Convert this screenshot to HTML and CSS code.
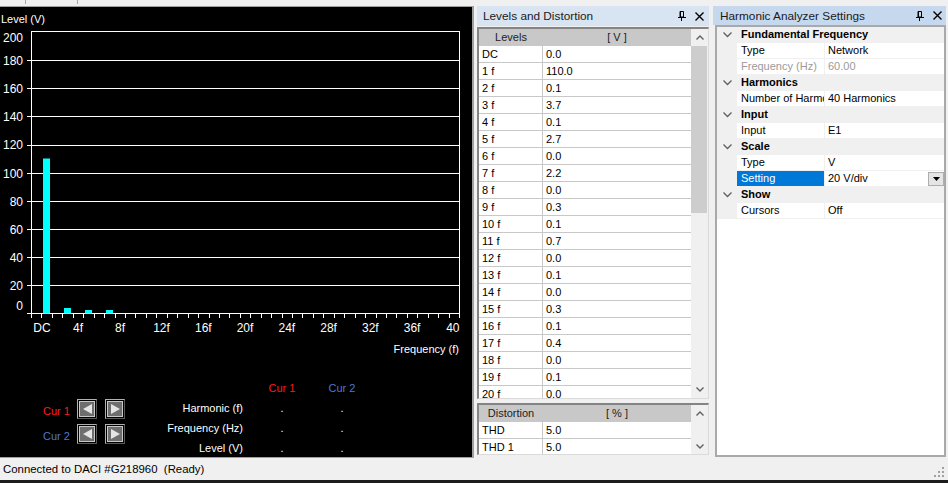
FILE: index.html
```html
<!DOCTYPE html>
<html>
<head>
<meta charset="utf-8">
<title>Harmonic Analyzer</title>
<link rel="stylesheet" href="styles.css">
</head>
<body>
<div class="app">
  <div class="topstrip"><span class="tsep s1"></span><span class="tsep s2"></span></div>
  <div class="main">
    <div class="chartpanel">
      <svg class="chart" width="472" height="370" viewBox="0 7 472 370">
        <text class="ct small" x="1" y="23">Level (V)</text>
        <g class="grid-lines" stroke="#fff" stroke-width="1" fill="none">
          <path d="M31 31.5H460"/>
          <path d="M27 60.5H460M27 88.5H460M27 116.5H460M27 145.5H460M27 173.5H460M27 201.5H460M27 229.5H460M27 257.5H460M27 285.5H460M27 313.5H460"/>
          <path d="M31.5 31V318M459.5 31V318"/>
          <path d="M41.5 314v4M52.5 314v4M62.5 314v4M73.5 314v4M83.5 314v4M94.5 314v4M104.5 314v4M115.5 314v4M125.5 314v4M135.5 314v4M146.5 314v4M156.5 314v4M167.5 314v4M177.5 314v4M188.5 314v4M198.5 314v4M209.5 314v4M219.5 314v4M229.5 314v4M240.5 314v4M250.5 314v4M261.5 314v4M271.5 314v4M282.5 314v4M292.5 314v4M302.5 314v4M313.5 314v4M323.5 314v4M334.5 314v4M344.5 314v4M355.5 314v4M365.5 314v4M376.5 314v4M386.5 314v4M396.5 314v4M407.5 314v4M417.5 314v4M428.5 314v4M438.5 314v4M449.5 314v4"/>
        </g>
        <g class="ct" text-anchor="end">
          <text x="23" y="42">200</text>
          <text x="23" y="65">180</text>
          <text x="23" y="93">160</text>
          <text x="23" y="121">140</text>
          <text x="23" y="149">120</text>
          <text x="23" y="178">100</text>
          <text x="23" y="206">80</text>
          <text x="23" y="234">60</text>
          <text x="23" y="262">40</text>
          <text x="23" y="290">20</text>
          <text x="23" y="310">0</text>
        </g>
        <g fill="#00ffff">
          <rect x="43" y="158.5" width="7" height="155"/>
          <rect x="64" y="308" width="7" height="5.5"/>
          <rect x="85" y="310" width="7" height="3.5"/>
          <rect x="106" y="310" width="7" height="3.5"/>
        </g>
        <g class="ct" text-anchor="middle">
          <text x="42" y="332">DC</text>
          <text x="78" y="332">4f</text>
          <text x="120" y="332">8f</text>
          <text x="161.5" y="332">12f</text>
          <text x="203.3" y="332">16f</text>
          <text x="245" y="332">20f</text>
          <text x="286.8" y="332">24f</text>
          <text x="328.6" y="332">28f</text>
          <text x="370.3" y="332">32f</text>
          <text x="412.1" y="332">36f</text>
          <text x="459.5" y="332" text-anchor="end">40</text>
        </g>
        <text class="ct small" x="459" y="353" text-anchor="end">Frequency (f)</text>
      </svg>
      <div class="cursors">
        <div class="curbtns">
          <div class="currow">
            <span class="curlbl red">Cur 1</span>
            <span class="cbtn"><span class="cbtn-in"><svg width="9" height="10" viewBox="0 0 9 10"><path d="M0 5L9 0V10Z" fill="#e4e4e4"/></svg></span></span>
            <span class="cbtn"><span class="cbtn-in"><svg width="9" height="10" viewBox="0 0 9 10"><path d="M9 5L0 0V10Z" fill="#e4e4e4"/></svg></span></span>
          </div>
          <div class="currow">
            <span class="curlbl blue">Cur 2</span>
            <span class="cbtn"><span class="cbtn-in"><svg width="9" height="10" viewBox="0 0 9 10"><path d="M0 5L9 0V10Z" fill="#e4e4e4"/></svg></span></span>
            <span class="cbtn"><span class="cbtn-in"><svg width="9" height="10" viewBox="0 0 9 10"><path d="M9 5L0 0V10Z" fill="#e4e4e4"/></svg></span></span>
          </div>
        </div>
        <div class="curtable">
          <span></span><span class="cv red">Cur 1</span><span class="cv blue">Cur 2</span>
          <span class="rl">Harmonic (f)</span><span class="cv">.</span><span class="cv">.</span>
          <span class="rl">Frequency (Hz)</span><span class="cv">.</span><span class="cv">.</span>
          <span class="rl">Level (V)</span><span class="cv">.</span><span class="cv">.</span>
        </div>
      </div>
    </div>

    <div class="midpanel">
      <div class="titlebar">
        <span class="ttext">Levels and Distortion</span>
        <svg class="pin" width="8" height="10" viewBox="0 0 8 10"><path d="M2 .5h3.5v5.5H2z M2.5 1v5" fill="none" stroke="#000"/><path d="M0 6.5h8M3.5 6.5V10" fill="none" stroke="#000"/></svg>
        <svg class="xic" width="9" height="9" viewBox="0 0 9 9"><path d="M.5 .5l8 8M8.5 .5l-8 8" stroke="#000" stroke-width="1.4"/></svg>
      </div>
      <div class="tbl levels">
        <div class="tbody">
          <div class="trow thead"><span class="c1">Levels</span><span class="c2">[ V ]</span></div>
          <div class="trow"><span class="c1">DC</span><span class="c2">0.0</span></div>
          <div class="trow"><span class="c1">1 f</span><span class="c2">110.0</span></div>
          <div class="trow"><span class="c1">2 f</span><span class="c2">0.1</span></div>
          <div class="trow"><span class="c1">3 f</span><span class="c2">3.7</span></div>
          <div class="trow"><span class="c1">4 f</span><span class="c2">0.1</span></div>
          <div class="trow"><span class="c1">5 f</span><span class="c2">2.7</span></div>
          <div class="trow"><span class="c1">6 f</span><span class="c2">0.0</span></div>
          <div class="trow"><span class="c1">7 f</span><span class="c2">2.2</span></div>
          <div class="trow"><span class="c1">8 f</span><span class="c2">0.0</span></div>
          <div class="trow"><span class="c1">9 f</span><span class="c2">0.3</span></div>
          <div class="trow"><span class="c1">10 f</span><span class="c2">0.1</span></div>
          <div class="trow"><span class="c1">11 f</span><span class="c2">0.7</span></div>
          <div class="trow"><span class="c1">12 f</span><span class="c2">0.0</span></div>
          <div class="trow"><span class="c1">13 f</span><span class="c2">0.1</span></div>
          <div class="trow"><span class="c1">14 f</span><span class="c2">0.0</span></div>
          <div class="trow"><span class="c1">15 f</span><span class="c2">0.3</span></div>
          <div class="trow"><span class="c1">16 f</span><span class="c2">0.1</span></div>
          <div class="trow"><span class="c1">17 f</span><span class="c2">0.4</span></div>
          <div class="trow"><span class="c1">18 f</span><span class="c2">0.0</span></div>
          <div class="trow"><span class="c1">19 f</span><span class="c2">0.1</span></div>
          <div class="trow"><span class="c1">20 f</span><span class="c2">0.0</span></div>
        </div>
        <div class="vscroll">
          <span class="sarrow"><svg width="8" height="5" viewBox="0 0 8 5"><path d="M.5 4.5L4 1l3.5 3.5" fill="none" stroke="#606060" stroke-width="1.4"/></svg></span>
          <span class="thumb"></span>
          <span class="track"></span>
          <span class="sarrow"><svg width="8" height="5" viewBox="0 0 8 5"><path d="M.5 .5L4 4l3.5-3.5" fill="none" stroke="#606060" stroke-width="1.4"/></svg></span>
        </div>
      </div>
      <div class="tbl dist">
        <div class="tbody">
          <div class="trow thead"><span class="c1">Distortion</span><span class="c2">[ % ]</span></div>
          <div class="trow"><span class="c1">THD</span><span class="c2">5.0</span></div>
          <div class="trow"><span class="c1">THD 1</span><span class="c2">5.0</span></div>
        </div>
        <div class="vscroll">
          <span class="sarrow"><svg width="8" height="5" viewBox="0 0 8 5"><path d="M.5 4.5L4 1l3.5 3.5" fill="none" stroke="#606060" stroke-width="1.4"/></svg></span>
          <span class="track"></span>
          <span class="sarrow"><svg width="8" height="5" viewBox="0 0 8 5"><path d="M.5 .5L4 4l3.5-3.5" fill="none" stroke="#606060" stroke-width="1.4"/></svg></span>
        </div>
      </div>
    </div>

    <div class="rightpanel">
      <div class="titlebar active">
        <span class="ttext">Harmonic Analyzer Settings</span>
        <svg class="pin" width="8" height="10" viewBox="0 0 8 10"><path d="M2 .5h3.5v5.5H2z M2.5 1v5" fill="none" stroke="#000"/><path d="M0 6.5h8M3.5 6.5V10" fill="none" stroke="#000"/></svg>
        <svg class="xic" width="9" height="9" viewBox="0 0 9 9"><path d="M.5 .5l8 8M8.5 .5l-8 8" stroke="#000" stroke-width="1.4"/></svg>
      </div>
      <div class="propgrid">
        <div class="pg cat"><span class="gut"><svg width="9" height="6" viewBox="0 0 9 6"><path d="M.5 .5l4 4 4-4" fill="none" stroke="#606060" stroke-width="1.3"/></svg></span><span class="cname">Fundamental Frequency</span></div>
        <div class="pg"><span class="gut"></span><span class="pname">Type</span><span class="pval">Network</span></div>
        <div class="pg dis"><span class="gut"></span><span class="pname">Frequency (Hz)</span><span class="pval">60.00</span></div>
        <div class="pg cat"><span class="gut"><svg width="9" height="6" viewBox="0 0 9 6"><path d="M.5 .5l4 4 4-4" fill="none" stroke="#606060" stroke-width="1.3"/></svg></span><span class="cname">Harmonics</span></div>
        <div class="pg"><span class="gut"></span><span class="pname"><span class="clip">Number of Harmonics</span></span><span class="pval">40 Harmonics</span></div>
        <div class="pg cat"><span class="gut"><svg width="9" height="6" viewBox="0 0 9 6"><path d="M.5 .5l4 4 4-4" fill="none" stroke="#606060" stroke-width="1.3"/></svg></span><span class="cname">Input</span></div>
        <div class="pg"><span class="gut"></span><span class="pname">Input</span><span class="pval">E1</span></div>
        <div class="pg cat"><span class="gut"><svg width="9" height="6" viewBox="0 0 9 6"><path d="M.5 .5l4 4 4-4" fill="none" stroke="#606060" stroke-width="1.3"/></svg></span><span class="cname">Scale</span></div>
        <div class="pg"><span class="gut"></span><span class="pname">Type</span><span class="pval">V</span></div>
        <div class="pg sel"><span class="gut"></span><span class="pname">Setting</span><span class="pval">20 V/div<span class="ddbtn"><svg width="7" height="4" viewBox="0 0 7 4"><path d="M0 0h7L3.5 4z" fill="#000"/></svg></span></span></div>
        <div class="pg cat"><span class="gut"><svg width="9" height="6" viewBox="0 0 9 6"><path d="M.5 .5l4 4 4-4" fill="none" stroke="#606060" stroke-width="1.3"/></svg></span><span class="cname">Show</span></div>
        <div class="pg"><span class="gut"></span><span class="pname">Cursors</span><span class="pval">Off</span></div>
      </div>
    </div>
  </div>
  <div class="statusbar">
    <span class="stext">Connected to DACI #G218960&nbsp; (Ready)</span>
    <svg class="grip" width="11" height="11" viewBox="0 0 11 11" fill="#a0a0a0"><rect x="8" y="0" width="2" height="2"/><rect x="4" y="4" width="2" height="2"/><rect x="8" y="4" width="2" height="2"/><rect x="0" y="8" width="2" height="2"/><rect x="4" y="8" width="2" height="2"/><rect x="8" y="8" width="2" height="2"/></svg>
  </div>
  <div class="bottomstrip"></div>
</div>
</body>
</html>
```
FILE: styles.css
```css
* { box-sizing: border-box; }
html, body { margin: 0; padding: 0; }
body {
  width: 948px;
  height: 483px;
  overflow: hidden;
  background: #f0f0f0;
  font-family: "Liberation Sans", Arial, sans-serif;
  font-size: 11px;
  color: #000;
}
.app { display: flex; flex-direction: column; width: 948px; height: 483px; }

.topstrip { height: 6px; flex: none; display: flex; }
.tsep { width: 1px; height: 4px; background: #a8a8a8; }
.s1 { margin-left: 25px; }
.s2 { margin-left: 51px; }

.main { height: 452px; flex: none; display: flex; }

/* chart */
.chartpanel {
  width: 474px;
  flex: none;
  background: #000;
  border-top: 1px solid #a0a0a0;
  border-right: 2px solid #a0a0a0;
  border-bottom: 1px solid #a0a0a0;
  display: flex;
  flex-direction: column;
}
.chart { display: block; flex: none; }
.ct { fill: #fff; font-family: "Liberation Sans", Arial, sans-serif; font-size: 12px; }
.small { font-size: 11px; }

.cursors { display: flex; padding-top: 1px; color: #fff; font-size: 11px; }
.curbtns { margin-left: 43px; margin-top: 21px; width: 82px; flex: none; display: flex; flex-direction: column; gap: 5px; }
.currow { display: flex; align-items: center; height: 20px; }
.curlbl { width: 34px; flex: none; padding-top: 3px; }
.red { color: #ff1a1a; }
.blue { color: #4a7ad4; }
.cbtn {
  width: 20px; height: 20px;
  flex: none;
  border: 1px solid;
  border-color: #b0b0b0 #5a5a5a #5a5a5a #b0b0b0;
  padding: 1px;
  margin-right: 8px;
  display: flex;
}
.cbtn-in {
  flex: 1;
  background: #6e6e6e;
  border: 1px solid #c8c8c8;
  display: flex; align-items: center; justify-content: center;
}
.cbtn-in svg { display: block; }
.curtable {
  margin-left: 5px;
  display: grid;
  grid-template-columns: 122px 60px 60px;
  grid-auto-rows: 20px;
  line-height: 20px;
}
.rl { text-align: right; padding-right: 9px; }
.cv { text-align: center; }

/* middle panel */
.midpanel { width: 238px; flex: none; padding: 0 3px; display: flex; flex-direction: column; }
.rightpanel { width: 236px; flex: none; padding: 0 2px 0 1px; display: flex; flex-direction: column; }

.titlebar {
  height: 20px; flex: none;
  background: #d8e4f2;
  display: flex; align-items: center;
  padding: 0 5px 0 6px;
  font-size: 11.8px;
  color: #1a1a1a;
}
.titlebar.active { height: 19px; background: #c6d8ee; padding: 0 4px 0 7px; }
.ttext { flex: 1; white-space: nowrap; }
.pin { display: block; margin-right: 9px; }
.xic { display: block; }

.tbl {
  flex: none;
  display: flex;
  background: #fff;
  border-top: 2px solid #848484;
  border-left: 2px solid #848484;
  border-right: 1px solid #dadada;
  border-bottom: 1px solid #dadada;
  overflow: hidden;
}
.levels { margin-top: 1px; height: 372px; }
.dist { margin-top: 4px; height: 52px; }
.tbody { width: 212px; flex: none; display: flex; flex-direction: column; }
.trow {
  height: 17px; flex: none;
  display: flex;
  border-bottom: 1px solid #c8c8c8;
  line-height: 17px;
}
.trow .c1 { width: 64px; padding-left: 3px; border-right: 1px solid #c8c8c8; white-space: nowrap; }
.trow .c2 { flex: 1; padding-left: 3px; }
.thead { background: #c8c8c8; color: #222; border-bottom: none; }
.thead .c1 { text-align: center; padding-left: 0; border-right: none; }
.thead .c2 { text-align: center; padding-left: 0; }

.vscroll { flex: 1; background: #f0f0f0; display: flex; flex-direction: column; }
.sarrow { height: 17px; flex: none; display: flex; align-items: center; justify-content: center; }
.sarrow svg { display: block; }
.thumb { height: 167px; flex: none; background: #cdcdcd; margin: 0 1px 0 0; }
.track { flex: 1; }
.dist .sarrow:last-child { height: 15px; }

/* property grid */
.propgrid {
  margin-left: 2px;
  height: 432px;
  flex: none;
  background: #fff;
  border: 2px solid #a9a9a9;
  display: flex; flex-direction: column;
}
.pg { height: 16px; flex: none; display: flex; border-bottom: 1px solid #f0f0f0; line-height: 15px; }
.gut { width: 20px; flex: none; background: #f0f0f0; display: flex; align-items: center; justify-content: center; }
.gut svg { display: block; margin-left: 1px; }
.cat { background: #f0f0f0; border-bottom-color: #f0f0f0; }
.cname { padding-left: 4px; font-weight: bold; white-space: nowrap; }
.pname { width: 88px; flex: none; padding-left: 4px; border-right: 1px solid #f0f0f0; white-space: nowrap; overflow: hidden; }
.clip { display: block; width: 83px; overflow: hidden; white-space: nowrap; }
.pval { flex: 1; padding-left: 3px; display: flex; justify-content: space-between; align-items: center; white-space: nowrap; }
.dis { color: #9a9a9a; }
.sel .pname { background: #0078d7; color: #fff; }
.ddbtn {
  width: 16px; height: 14px;
  background: #e5e5e5;
  border: 1px solid #adadad;
  display: flex; align-items: center; justify-content: center;
}
.ddbtn svg { display: block; }

.statusbar {
  height: 22px; flex: none;
  display: flex; align-items: center; justify-content: space-between;
  padding: 0 3px 0 3px;
  font-size: 11.4px;
}
.stext { white-space: nowrap; }
.grip { display: block; align-self: flex-end; margin-bottom: 2px; }

.bottomstrip { height: 3px; flex: none; background: #1c1c1c; }
```
